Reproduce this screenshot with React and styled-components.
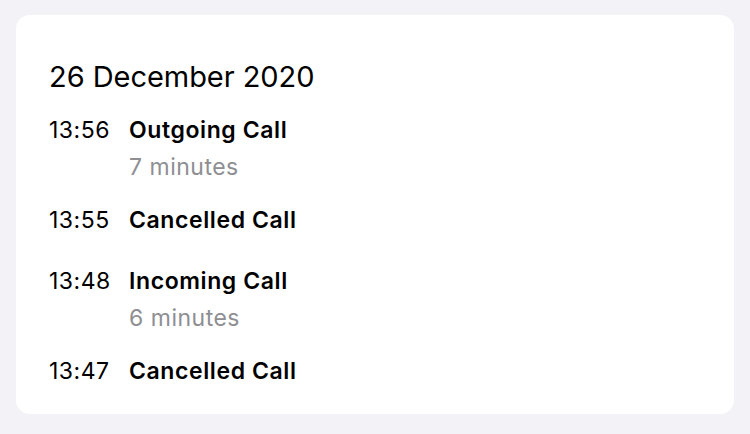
import React from "react";
import styled, { createGlobalStyle } from "styled-components";

const GlobalStyle = createGlobalStyle`
  body {
    margin: 0;
    background: #f2f2f7;
    font-family: Inter, "Noto Sans", "Liberation Sans", sans-serif;
    -webkit-font-smoothing: antialiased;
  }
`;

const Page = styled.div`
  padding: 15px 16px 20px;
`;

const Card = styled.div`
  background: #ffffff;
  border-radius: 14px;
  padding: 45px 33px 0;
  height: 399px;
  box-sizing: border-box;
`;

const DateTitle = styled.div`
  font-size: 29px;
  line-height: 34px;
  letter-spacing: -0.05px;
  color: #000;
  margin-bottom: 18px;
`;

const Row = styled.div`
  display: flex;
  min-height: 61px;
  padding-bottom: 16px;
  box-sizing: border-box;
`;

const Time = styled.div`
  width: 80px;
  font-size: 23px;
  line-height: 37px;
  letter-spacing: 0.5px;
  color: #000;
`;

const Details = styled.div`
  display: flex;
  flex-direction: column;
`;

const Kind = styled.div`
  font-size: 23px;
  line-height: 37px;
  letter-spacing: 0.6px;
  font-weight: 600;
  color: #000;
`;

const Duration = styled.div`
  font-size: 23px;
  line-height: 37px;
  letter-spacing: 0.5px;
  color: #8e8e93;
`;

const calls = [
  { time: "13:56", kind: "Outgoing Call", duration: "7 minutes" },
  { time: "13:55", kind: "Cancelled Call" },
  { time: "13:48", kind: "Incoming Call", duration: "6 minutes" },
  { time: "13:47", kind: "Cancelled Call" },
];

const App = () => {
  return (
    <Page>
      <GlobalStyle />
      <Card>
        <DateTitle>26 December 2020</DateTitle>
        {calls.map((call, index) => (
          <Row key={index}>
            <Time>{call.time}</Time>
            <Details>
              <Kind>{call.kind}</Kind>
              {call.duration && <Duration>{call.duration}</Duration>}
            </Details>
          </Row>
        ))}
      </Card>
    </Page>
  );
};

export default App;
